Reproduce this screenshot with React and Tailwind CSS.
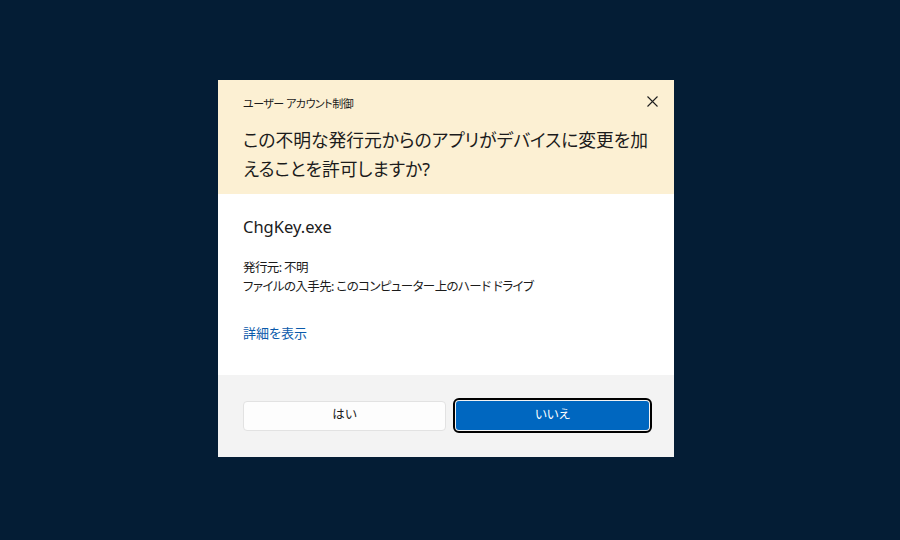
import React from "react";

const font = { fontFamily: '"Noto Sans", "Noto Sans CJK JP", sans-serif' };

const CloseIcon = () => (
    <svg width="11" height="11" viewBox="0 0 11 11" fill="none" stroke="#1f1f1f" strokeWidth="1.1">
        <path d="M0.5 0.5L10.5 10.5M10.5 0.5L0.5 10.5" />
    </svg>
);

const App = () => {
    return (
        <div
            className="w-[900px] h-[540px] bg-[#041d35] flex items-center justify-center pr-[8px] pb-[4px] [font-feature-settings:'palt']"
            style={font}
        >
            <div className="w-[456px] h-[377px] flex flex-col bg-white">
                {/* header */}
                <div className="bg-[#fcf0d3] h-[114px] pl-[25px] pr-[12px] pt-[14px] flex flex-col">
                    <div className="flex items-start justify-between">
                        <div className="text-[11px] tracking-[-0.5px] text-[#1b1b1b] mt-[2px]">ユーザー アカウント制御</div>
                        <button className="w-[20px] h-[20px] flex items-center justify-center -mt-[2px]">
                            <CloseIcon />
                        </button>
                    </div>
                    <div className="text-[17.8px] leading-[29px] text-[#1b1b1b] mt-[14px] whitespace-nowrap">
                        この不明な発行元からのアプリがデバイスに変更を加
                        <br />
                        えることを許可しますか?
                    </div>
                </div>

                {/* body */}
                <div className="flex-1 pl-[25px] pt-[21px]">
                    <div className="text-[16.5px] text-[#1b1b1b] leading-[24px]">ChgKey.exe</div>
                    <div className="mt-[19px] text-[12.5px] leading-[19px] text-[#1b1b1b] tracking-[-0.6px]">
                        <div>発行元: 不明</div>
                        <div>ファイルの入手先: このコンピューター上のハード ドライブ</div>
                    </div>
                    <div className="mt-[28px] text-[13px] text-[#0a5aab] leading-[19px]">詳細を表示</div>
                </div>

                {/* footer */}
                <div className="h-[82px] bg-[#f3f3f3] pl-[25px] flex items-center gap-[7px]">
                    <button className="w-[203px] h-[30px] bg-[#fdfdfd] border border-[#e2e2e2] rounded-[4px] text-[12.5px] text-[#1b1b1b]">
                        はい
                    </button>
                    <div className="w-[199px] rounded-[6px] border-2 border-black p-[1px]">
                        <button className="w-full h-[29px] bg-[#0067c0] rounded-[3px] text-[12.5px] text-white">
                            いいえ
                        </button>
                    </div>
                </div>
            </div>
        </div>
    );
};

export default App;
